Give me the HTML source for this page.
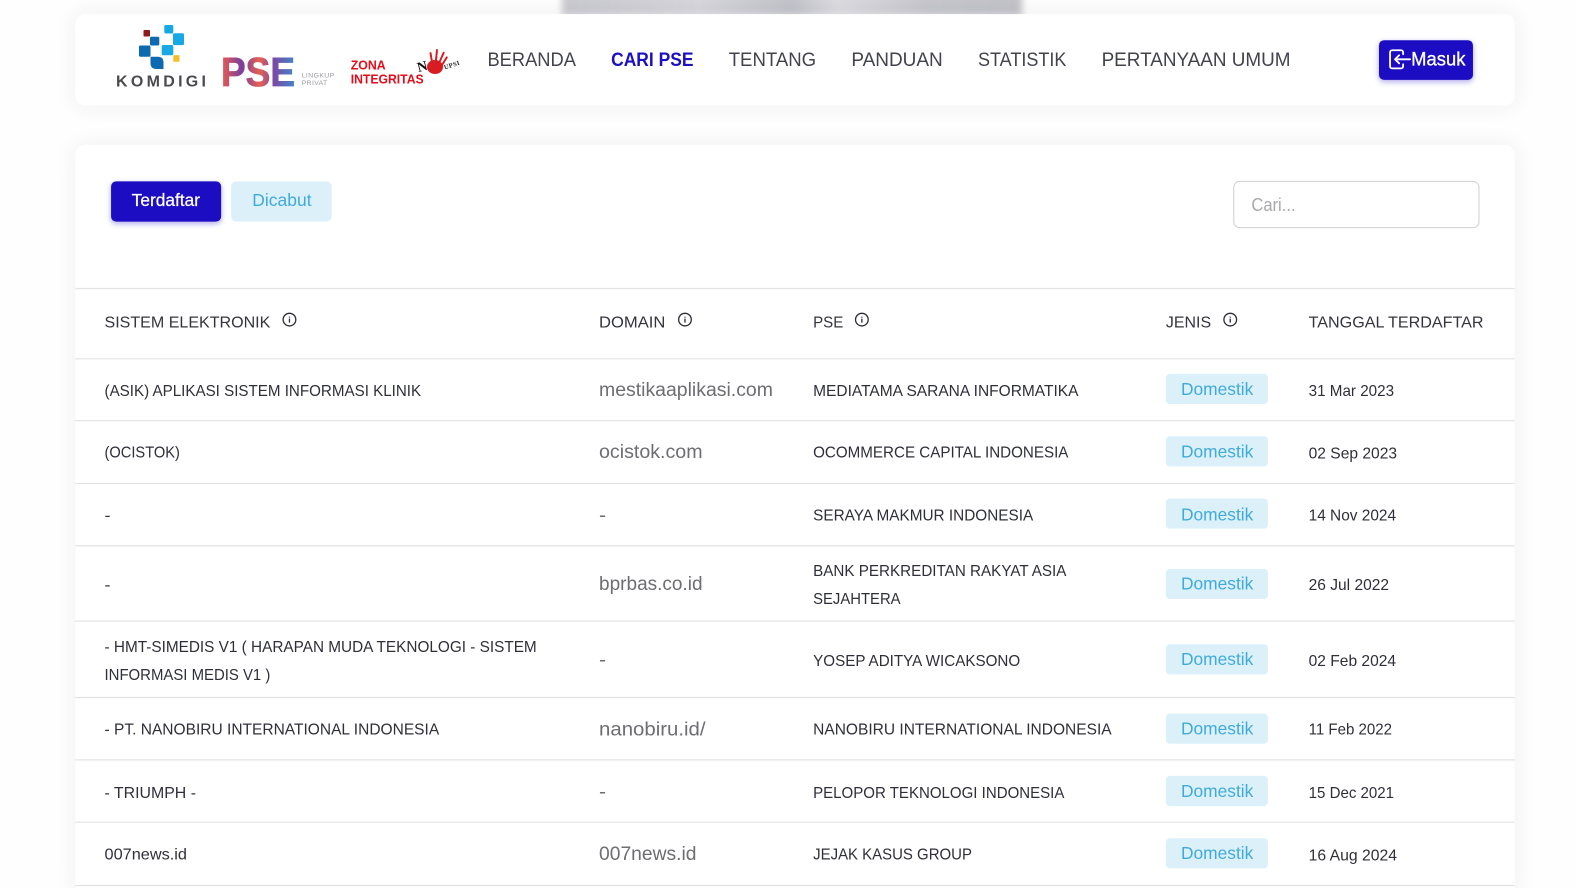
<!DOCTYPE html>
<html lang="id"><head><meta charset="utf-8"><title>PSE</title>
<style>
html,body{margin:0;padding:0;width:1576px;height:888px;overflow:hidden;background:#fefefe}
#w{position:relative;width:1576px;height:888px;overflow:hidden;background:#fefefe}
#z{position:absolute;left:0;top:0;width:1568px;height:884px;transform:scale(1.0051);transform-origin:0 0}
.blur{position:absolute;left:559px;top:-14px;width:458px;height:30px;background:linear-gradient(90deg,#c9c9cf,#d6d6db 30%,#c2c2c9 50%,#dcdce0 60%,#c6c6cc 80%,#c2c2c8);filter:blur(3.500px)}
.card{position:absolute;left:75px;width:1432px;background:#fff;border-radius:10px;box-shadow:0 0 22px rgba(40,40,90,.07)}
svg{position:absolute;left:0;top:0;display:block}
text{font-family:"Liberation Sans",sans-serif}
.n{font-size:19px;fill:#43434e}
.t{font-size:16px;fill:#2f2f3a}
.h{font-size:16px;fill:#34343f}
.d{font-size:19px;fill:#6d6d72}
.b{font-size:17px;fill:#3fabdc}
.l{stroke:#e3e3e6;stroke-width:1.2}
.bd{fill:#dcf0fa}
.i{fill:none;stroke:#2b2b33;stroke-width:1.3}
</style></head><body>
<div id="w">
<div id="z">
<div class="blur"></div>
<div class="card" style="top:14px;height:91px"></div>
<div class="card" style="top:144px;height:744px;border-radius:10px 10px 0 0"></div>
<svg width="1568" height="884" viewBox="0 0 1568 884">
<defs>
<filter id="sh" x="-20%" y="-30%" width="140%" height="170%"><feDropShadow dx="0" dy="2" stdDeviation="3" flood-color="#1c10c2" flood-opacity=".35"/></filter>
</defs>

<!-- nav -->
<text class="n" x="485" y="65.500" textLength="88" lengthAdjust="spacingAndGlyphs">BERANDA</text>
<text x="608" y="65.500" font-size="19" font-weight="700" fill="#1c10c2" textLength="82" lengthAdjust="spacingAndGlyphs">CARI PSE</text>
<text class="n" x="725" y="65.500" textLength="87" lengthAdjust="spacingAndGlyphs">TENTANG</text>
<text class="n" x="847" y="65.500" textLength="91" lengthAdjust="spacingAndGlyphs">PANDUAN</text>
<text class="n" x="973" y="65.500" textLength="88" lengthAdjust="spacingAndGlyphs">STATISTIK</text>
<text class="n" x="1096" y="65.500" textLength="188" lengthAdjust="spacingAndGlyphs">PERTANYAAN UMUM</text>

<!-- masuk -->
<rect x="1372" y="40" width="93.500" height="39.500" rx="5" fill="#1c10c2" filter="url(#sh)"/>
<path d="M1396 54v-2a2 2 0 0 0-2-2h-9a2 2 0 0 0-2 2v14a2 2 0 0 0 2 2h9a2 2 0 0 0 2-2v-2M1388 59h15M1392 55l-4 4 4 4" fill="none" stroke="#fff" stroke-width="1.800" stroke-linecap="round" stroke-linejoin="round"/>
<text x="1404" y="65" font-size="19" fill="#fff" stroke="#fff" stroke-width=".3" textLength="54" lengthAdjust="spacingAndGlyphs">Masuk</text>

<!-- tabs -->
<rect x="110.500" y="180.500" width="109.500" height="40" rx="5" fill="#1c10c2" filter="url(#sh)"/>
<text x="131" y="205" font-size="17" fill="#fff" stroke="#fff" stroke-width=".25" textLength="68" lengthAdjust="spacingAndGlyphs">Terdaftar</text>
<rect x="230" y="180.500" width="100" height="40" rx="5" fill="#dcf0fa"/>
<text class="b" x="251" y="205" textLength="59" lengthAdjust="spacingAndGlyphs">Dicabut</text>

<!-- search -->
<rect x="1227.500" y="180.500" width="244" height="46" rx="6" fill="#fff" stroke="#cfcfd3"/>
<text x="1245" y="210" font-size="18" fill="#a9a9ad" textLength="44" lengthAdjust="spacingAndGlyphs">Cari...</text>

<!-- lines -->
<path class="l" d="M75 287H1507M75 357H1507M75 418.500H1507M75 481H1507M75 543H1507M75 618H1507M75 694H1507M75 756H1507M75 818H1507M75 881H1507"/>

<!-- header -->
<text class="h" x="104" y="326" textLength="165" lengthAdjust="spacingAndGlyphs">SISTEM ELEKTRONIK</text>
<text class="h" x="596" y="326" textLength="66" lengthAdjust="spacingAndGlyphs">DOMAIN</text>
<text class="h" x="809" y="326" textLength="30" lengthAdjust="spacingAndGlyphs">PSE</text>
<text class="h" x="1160" y="326" textLength="45" lengthAdjust="spacingAndGlyphs">JENIS</text>
<text class="h" x="1302" y="326" textLength="174" lengthAdjust="spacingAndGlyphs">TANGGAL TERDAFTAR</text>
<g class="i">
<circle cx="288" cy="318" r="6.300"/><path d="M288 317v4M288 315v1"/>
<circle cx="681.500" cy="318" r="6.300"/><path d="M681.500 317v4M681.500 315v1"/>
<circle cx="857.500" cy="318" r="6.300"/><path d="M857.500 317v4M857.500 315v1"/>
<circle cx="1224" cy="318" r="6.300"/><path d="M1224 317v4M1224 315v1"/>
</g>

<!-- badges -->
<g class="bd">
<rect x="1160" y="372" width="101.500" height="30" rx="4"/>
<rect x="1160" y="434" width="101.500" height="30" rx="4"/>
<rect x="1160" y="496" width="101.500" height="30" rx="4"/>
<rect x="1160" y="566" width="101.500" height="30" rx="4"/>
<rect x="1160" y="641" width="101.500" height="30" rx="4"/>
<rect x="1160" y="710" width="101.500" height="30" rx="4"/>
<rect x="1160" y="772" width="101.500" height="30" rx="4"/>
<rect x="1160" y="834" width="101.500" height="30" rx="4"/>
</g>
<text class="b" x="1175" y="393" textLength="72" lengthAdjust="spacingAndGlyphs">Domestik</text>
<text class="b" x="1175" y="455" textLength="72" lengthAdjust="spacingAndGlyphs">Domestik</text>
<text class="b" x="1175" y="517.800" textLength="72" lengthAdjust="spacingAndGlyphs">Domestik</text>
<text class="b" x="1175" y="586.500" textLength="72" lengthAdjust="spacingAndGlyphs">Domestik</text>
<text class="b" x="1175" y="661.800" textLength="72" lengthAdjust="spacingAndGlyphs">Domestik</text>
<text class="b" x="1175" y="730.800" textLength="72" lengthAdjust="spacingAndGlyphs">Domestik</text>
<text class="b" x="1175" y="792.800" textLength="72" lengthAdjust="spacingAndGlyphs">Domestik</text>
<text class="b" x="1175" y="854.800" textLength="72" lengthAdjust="spacingAndGlyphs">Domestik</text>

<!-- row 1 -->
<text class="t" x="104" y="394" textLength="315" lengthAdjust="spacingAndGlyphs">(ASIK) APLIKASI SISTEM INFORMASI KLINIK</text>
<text class="d" x="596" y="394" textLength="173" lengthAdjust="spacingAndGlyphs">mestikaaplikasi.com</text>
<text class="t" x="809" y="394" textLength="264" lengthAdjust="spacingAndGlyphs">MEDIATAMA SARANA INFORMATIKA</text>
<text class="t" x="1302" y="394" textLength="85" lengthAdjust="spacingAndGlyphs">31 Mar 2023</text>
<!-- row 2 -->
<text class="t" x="104" y="455" textLength="75" lengthAdjust="spacingAndGlyphs">(OCISTOK)</text>
<text class="d" x="596" y="455.800" textLength="103" lengthAdjust="spacingAndGlyphs">ocistok.com</text>
<text class="t" x="809" y="455" textLength="254" lengthAdjust="spacingAndGlyphs">OCOMMERCE CAPITAL INDONESIA</text>
<text class="t" x="1302" y="456" textLength="88" lengthAdjust="spacingAndGlyphs">02 Sep 2023</text>
<!-- row 3 -->
<text class="t" x="104" y="518" textLength="6" lengthAdjust="spacingAndGlyphs">-</text>
<text class="d" x="596" y="518.800" textLength="7" lengthAdjust="spacingAndGlyphs">-</text>
<text class="t" x="809" y="518" textLength="219" lengthAdjust="spacingAndGlyphs">SERAYA MAKMUR INDONESIA</text>
<text class="t" x="1302" y="518" textLength="87" lengthAdjust="spacingAndGlyphs">14 Nov 2024</text>
<!-- row 4 -->
<text class="t" x="104" y="587" textLength="6" lengthAdjust="spacingAndGlyphs">-</text>
<text class="d" x="596" y="586.800" textLength="103" lengthAdjust="spacingAndGlyphs">bprbas.co.id</text>
<text class="t" x="809" y="573" textLength="252" lengthAdjust="spacingAndGlyphs">BANK PERKREDITAN RAKYAT ASIA</text>
<text class="t" x="809" y="601" textLength="87" lengthAdjust="spacingAndGlyphs">SEJAHTERA</text>
<text class="t" x="1302" y="587" textLength="80" lengthAdjust="spacingAndGlyphs">26 Jul 2022</text>
<!-- row 5 -->
<text class="t" x="104" y="648.500" textLength="430" lengthAdjust="spacingAndGlyphs">- HMT-SIMEDIS V1 ( HARAPAN MUDA TEKNOLOGI - SISTEM</text>
<text class="t" x="104" y="676.500" textLength="165" lengthAdjust="spacingAndGlyphs">INFORMASI MEDIS V1 )</text>
<text class="d" x="596" y="662.800" textLength="7" lengthAdjust="spacingAndGlyphs">-</text>
<text class="t" x="809" y="662.500" textLength="206" lengthAdjust="spacingAndGlyphs">YOSEP ADITYA WICAKSONO</text>
<text class="t" x="1302" y="662.500" textLength="87" lengthAdjust="spacingAndGlyphs">02 Feb 2024</text>
<!-- row 6 -->
<text class="t" x="104" y="731" textLength="333" lengthAdjust="spacingAndGlyphs">- PT. NANOBIRU INTERNATIONAL INDONESIA</text>
<text class="d" x="596" y="731.800" textLength="106" lengthAdjust="spacingAndGlyphs">nanobiru.id/</text>
<text class="t" x="809" y="731" textLength="297" lengthAdjust="spacingAndGlyphs">NANOBIRU INTERNATIONAL INDONESIA</text>
<text class="t" x="1302" y="731" textLength="83" lengthAdjust="spacingAndGlyphs">11 Feb 2022</text>
<!-- row 7 -->
<text class="t" x="104" y="793.800" textLength="91" lengthAdjust="spacingAndGlyphs">- TRIUMPH -</text>
<text class="d" x="596" y="793.800" textLength="7" lengthAdjust="spacingAndGlyphs">-</text>
<text class="t" x="809" y="793.800" textLength="250" lengthAdjust="spacingAndGlyphs">PELOPOR TEKNOLOGI INDONESIA</text>
<text class="t" x="1302" y="794" textLength="85" lengthAdjust="spacingAndGlyphs">15 Dec 2021</text>
<!-- row 8 -->
<text class="t" x="104" y="855" textLength="82" lengthAdjust="spacingAndGlyphs">007news.id</text>
<text class="d" x="596" y="855.800" textLength="97" lengthAdjust="spacingAndGlyphs">007news.id</text>
<text class="t" x="809" y="855" textLength="158" lengthAdjust="spacingAndGlyphs">JEJAK KASUS GROUP</text>
<text class="t" x="1302" y="856" textLength="88" lengthAdjust="spacingAndGlyphs">16 Aug 2024</text>
</svg>
</div>

<!-- logos: true pixel coordinates -->
<svg width="1576" height="888" viewBox="0 0 1576 888">
<defs>
<linearGradient id="g" x1="0" x2="1" y1="0" y2="0"><stop offset="0" stop-color="#ee5a4c"/><stop offset=".28" stop-color="#7a3f9e"/><stop offset=".52" stop-color="#e8604f"/><stop offset=".72" stop-color="#7a4aa8"/><stop offset="1" stop-color="#3f86c8"/></linearGradient>
<filter id="s" x="-10%" y="-10%" width="120%" height="120%"><feGaussianBlur stdDeviation=".35"/></filter>
</defs>
<g filter="url(#s)">
<rect x="143.500" y="30" width="6.500" height="6.500" rx=".8" fill="#8e1b1f"/>
<g fill="#0f69b0">
<rect x="150" y="36.700" width="9.300" height="8.800" rx="1.200"/>
<rect x="139" y="45.500" width="11.500" height="11.200" rx="1.200"/>
<path d="M150.500 56.700h8a5 5 0 0 1 5 5V69h-8a5 5 0 0 1-5-5z"/>
</g>
<g fill="#15a9e4">
<rect x="164.300" y="25" width="9" height="8.500" rx="1.500"/>
<rect x="173" y="33.300" width="11" height="11.800" rx="1.500"/>
<rect x="161.700" y="45" width="11.600" height="10.200" rx="1.500"/>
</g>
<rect x="173.300" y="55.200" width="6.200" height="6.500" fill="#f2bd2c"/>
<text x="116" y="86.700" font-size="16" font-weight="700" fill="#4b4b4f" textLength="90" lengthAdjust="spacing">KOMDIGI</text>
<text x="221" y="86" font-size="41" font-weight="700" fill="url(#g)" stroke="url(#g)" stroke-width=".8" textLength="74" lengthAdjust="spacingAndGlyphs">PSE</text>
<text x="301.700" y="77.300" font-size="6.800" fill="#9a9aa0" textLength="32.500" lengthAdjust="spacing">LINGKUP</text>
<text x="301.700" y="85" font-size="6.800" fill="#9a9aa0" textLength="25.500" lengthAdjust="spacing">PRIVAT</text>
<text x="350.700" y="69.300" font-size="13" font-weight="700" fill="#e3101d" textLength="35" lengthAdjust="spacingAndGlyphs">ZONA</text>
<text x="350.700" y="83.500" font-size="13" font-weight="700" fill="#e3101d" textLength="73" lengthAdjust="spacingAndGlyphs">INTEGRITAS</text>
<ellipse cx="435" cy="67" rx="8" ry="7" fill="#d81a20"/>
<path d="M432 62l-1.500-9M436 60l1-10M440 61l4-9M442 65l5-8" fill="none" stroke="#d81a20" stroke-width="2" stroke-linecap="round" stroke-dasharray="4 1"/>
<text x="417" y="71" style="font-family:'Liberation Serif',serif" font-size="14" font-weight="700" fill="#111" transform="rotate(-15 422 66)">N</text>
<text x="444" y="69" style="font-family:'Liberation Serif',serif" font-size="6.500" font-weight="700" fill="#222" textLength="16" lengthAdjust="spacing" transform="rotate(-18 446 67)">UPSI</text>
</g>
</svg>
</div>
</body></html>
